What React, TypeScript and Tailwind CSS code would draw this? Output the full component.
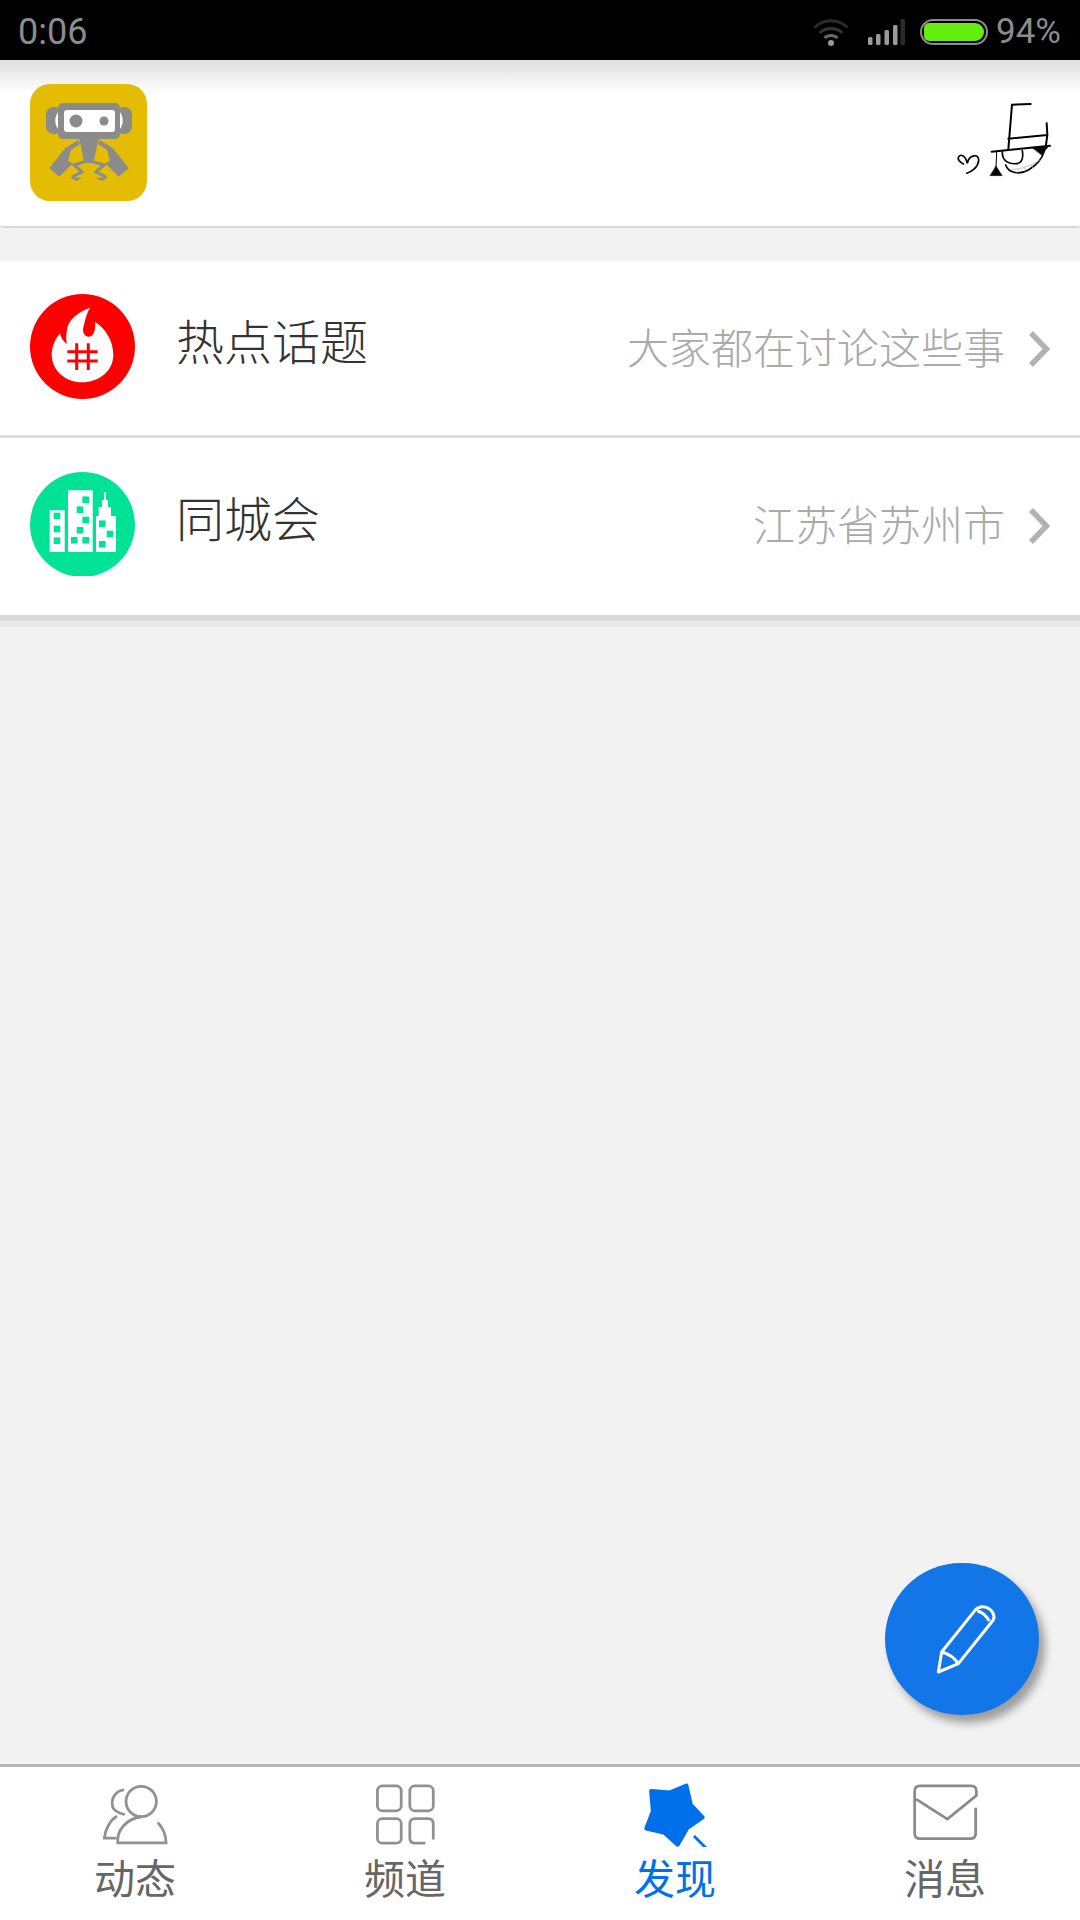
const cjk = "font-['Noto_Sans_CJK_SC',sans-serif]";

function Logo() {
  return (
    <svg viewBox="0 0 117 117" className="w-[117px] h-[117px]">
      <rect width="117" height="117" rx="20" fill="#e4bc03" />
      <g fill="#8b8b8b">
        <rect x="16" y="23" width="16" height="27" rx="7.500" />
        <rect x="86" y="23" width="16" height="27" rx="7.500" />
      </g>
      <path d="M29 27C24 32 24 41 29 46H32V27ZM89 27C94 32 94 41 89 46H86V27Z" fill="#fff" />
      <g fill="#8b8b8b">
        <rect x="28" y="19" width="62" height="36" rx="5" />
        <path d="M49 54H69L67 62L63.500 79H54L51 62Z" />
        <path d="M48.300 56L35 64.300L19.300 84.300L29.300 92.700L42.700 79.300L38 77L41 66L50 60Z" />
        <path d="M40 93L52 94L46 97Z" />
        <g transform="translate(118 0) scale(-1 1)">
          <path d="M48.300 56L35 64.300L19.300 84.300L29.300 92.700L42.700 79.300L38 77L41 66L50 60Z" />
          <path d="M40 93L52 94L46 97Z" />
        </g>
      </g>
      <path d="M54 78L44 81L52 88L42 93M64 78L74 81L66 88L76 93" fill="none" stroke="#8b8b8b" strokeWidth="3" />
      <rect x="34" y="26" width="51" height="22" rx="3" fill="#fff" />
      <circle cx="46" cy="37" r="6.500" fill="#8b8b8b" />
      <circle cx="74" cy="37" r="4.500" fill="#8b8b8b" />
    </svg>
  );
}

function Avatar() {
  return (
    <svg viewBox="0 0 390 300" className="w-[130px] h-[100px]" fill="none" stroke="#000" strokeLinecap="round">
      <path d="M272 42L216 44L205 178M320 100L322 135L318 165M205 146L322 135" strokeWidth="6" />
      <path d="M155 185L330 167" strokeWidth="6" />
      <path d="M275 172L325 170L305 195Z" fill="#000" strokeWidth="1" />
      <path d="M187 185C185 215 210 225 235 220C248 215 250 200 247 182" strokeWidth="5" />
      <path d="M197 225C205 250 240 255 265 240C290 225 305 210 312 185" strokeWidth="5" />
      <path d="M215 238C245 238 280 225 300 210M235 238L233 248M255 233L255 243M275 224L278 234" stroke="#aaa" strokeWidth="2" />
      <path d="M170 185L168 235" strokeWidth="3" />
      <path d="M150 257H187L168 228Z" fill="#000" strokeWidth="1" />
      <path d="M70 222C60 215 52 210 55 202C60 190 76 195 82 220C86 195 118 188 116 212C114 232 95 245 80 250" strokeWidth="5" />
    </svg>
  );
}

function FlameIcon() {
  return (
    <svg viewBox="0 0 105 105" className="w-[105px] h-[105px]">
      <circle cx="52.500" cy="52.500" r="52.500" fill="#ff0000" />
      <path
        d="M60 13.700C48 18 37 26 36.700 38C36 43 36 46 37 50C33 47 31 44 30 39.300C25 45 21.700 53 21.700 61C22 77 36 88.300 51.700 88.300C69 88.300 83.300 77 83.300 61C83.300 47 76 35 65 27.700C66 35 64 42.700 58.300 42.700C53 42 52 36 54 31C55 25 57 19 60 13.700Z"
        fill="#fff"
      />
      <path d="M46.700 49.300V76M58.300 49.300V76M37.300 57.700H67.700M37.300 67H67.700" stroke="#ff0000" strokeWidth="3" />
    </svg>
  );
}

const cityWindows = [
  [27, 44], [27, 57], [27, 68.7],
  [55.7, 27.7], [50, 37.7], [55.7, 48], [50, 58.300], [44.300, 68.300], [55.700, 68.300],
  [72.300, 51.700], [80, 62], [72.300, 72.300],
];

function CityIcon() {
  return (
    <svg viewBox="0 0 105 104" className="w-[105px] h-[104px]">
      <circle cx="52.500" cy="52.500" r="52.500" fill="#00e396" />
      <path d="M19.700 38.300H34.700V80H19.700ZM38 18.300H62.700V80H38ZM66 80V44H68.700V35H72V28H74V20.500H76V28H78V35H81V44H86V80Z" fill="#fff" />
      {cityWindows.map(([x, y]) => (
        <rect key={`${x}-${y}`} x={x - 3.3} y={y - 3.3} width="6.600" height="6.600" fill="#00e396" />
      ))}
    </svg>
  );
}

function StatusIcons() {
  return (
    <div className="flex items-center">
      <svg viewBox="0 0 36 28" className="w-[36px] h-[28px]" fill="none">
        <path d="M1.500 9.500C11 0.500 25 0.500 34.500 9.500" stroke="#2b2b2b" strokeWidth="3" />
        <path d="M6.500 15C13 9 23 9 29.500 15" stroke="#333" strokeWidth="3" />
        <path d="M11.500 20C15 16.500 21 16.500 24.500 20" stroke="#6a6a6a" strokeWidth="3" />
        <circle cx="18" cy="25" r="3" fill="#9a9a9a" />
      </svg>
      <svg viewBox="0 0 38 26" className="w-[38px] h-[26px] ml-[19px]">
        <rect x="0" y="18" width="4.500" height="8" rx="1.500" fill="#9a9a9a" />
        <rect x="8" y="15" width="4.500" height="11" rx="1.500" fill="#9a9a9a" />
        <rect x="16.500" y="11" width="4.500" height="15" rx="1.500" fill="#9a9a9a" />
        <rect x="25" y="6" width="4.500" height="20" rx="1.500" fill="#9a9a9a" />
        <rect x="32.500" y="0" width="4.500" height="26" rx="1" fill="#2b2b2b" />
      </svg>
      <div className="ml-[14px] w-[68px] h-[26px] rounded-full border-2 border-[#8c8c8c] p-[2px]">
        <div className="w-full h-full rounded-l-[5px] rounded-r-[9px] bg-[#66ee11]" />
      </div>
      <span className="ml-[8px] text-[35px] leading-none text-[#8c8c8c] font-['Roboto',sans-serif]">94%</span>
    </div>
  );
}

function Chevron() {
  return (
    <svg viewBox="0 0 22 36" className="w-[22px] h-[36px] ml-[23px] mr-[30px] mt-[15px]" fill="none" stroke="#b2b2b2" strokeWidth="5.500">
      <path d="M3 2L18.500 18L3 34" />
    </svg>
  );
}

function TabIcon({ name }: { name: string }) {
  const base = 'w-[70px] h-[70px]';
  if (name === 'people') {
    return (
      <svg viewBox="290.500 81 203 203" className={base} fill="none" stroke="#919191" strokeWidth="8">
        <circle cx="410" cy="152" r="44" />
        <path d="M458 213C472 228 482 250 482 272H342C338 235 370 200 410 197" />
        <path d="M360 118C335 120 320 145 328 170C332 180 345 185 362 190M340 195C320 205 305 235 303 258H338" />
      </svg>
    );
  }
  if (name === 'grid') {
    return (
      <svg viewBox="1074.500 81 203 203" className={base} fill="none" stroke="#919191" strokeWidth="8">
        <rect x="1096" y="107" width="69" height="72" rx="14" />
        <rect x="1190" y="107" width="68" height="72" rx="14" />
        <rect x="1096" y="202" width="69" height="71" rx="14" />
        <path d="M1235 273H1205Q1190 273 1190 258V217Q1190 202 1205 202H1243Q1258 202 1258 217V262" />
      </svg>
    );
  }
  if (name === 'star') {
    return (
      <svg viewBox="290.500 81 203 203" className={base} fill="#0070ea" stroke="#0070ea" strokeLinejoin="round">
        <path d="M425 106L438 162L472 198L428 228L400 277L362 243L309 230L328 180L323 122L378 126Z" strokeWidth="12" />
        <path d="M447 252L485 290" fill="none" strokeWidth="8" />
      </svg>
    );
  }
  return (
    <svg viewBox="1074.500 81 203 203" className={base} fill="none" stroke="#8a8a8a" strokeWidth="8">
      <path d="M1265 170V245Q1265 260 1250 260H1103Q1088 260 1088 245V122Q1088 107 1103 107H1252Q1267 107 1267 122V135L1183 203L1092 145" />
    </svg>
  );
}

const tabs = [
  { icon: 'people', label: '动态', active: false },
  { icon: 'grid', label: '频道', active: false },
  { icon: 'star', label: '发现', active: true },
  { icon: 'mail', label: '消息', active: false },
];

export default function App() {
  return (
    <div className={`w-[1080px] h-[1920px] flex flex-col bg-[#f2f2f2] overflow-hidden ${cjk}`}>
      {/* Status bar */}
      <div className="h-[60px] shrink-0 bg-black flex items-center justify-between pl-[18px] pr-[19px] pt-[3px]">
        <span className="text-[36px] leading-none text-[#8c8c8c] font-['Roboto',sans-serif]">0:06</span>
        <StatusIcons />
      </div>

      {/* Header */}
      <div className="h-[168px] shrink-0 flex items-start justify-between pl-[30px] pr-[10px] pt-[24px] rounded-b-[4px] border-b-2 border-[#d5dade] bg-linear-to-b from-[#dedede] to-white to-[20%]">
        <Logo />
        <div className="mt-[6px]">
          <Avatar />
        </div>
      </div>

      {/* Rows */}
      <div className="mt-[33px] shrink-0 flex flex-col">
        <div className="h-[177px] shrink-0 flex items-start pl-[30px] pt-[33px] bg-white border-b-[3px] border-[#dcdcdc]">
          <FlameIcon />
          <span className="ml-[41px] mt-[10px] text-[48px] leading-[70px] font-light text-[#333333]">热点话题</span>
          <div className="ml-auto mt-[22px] flex items-start">
            <span className="text-[42px] leading-[60px] font-light text-[#aaaaaa]">大家都在讨论这些事</span>
            <Chevron />
          </div>
        </div>
        <div className="h-[177px] shrink-0 flex items-start pl-[30px] pt-[34px] bg-white">
          <CityIcon />
          <span className="ml-[41px] mt-[9px] text-[48px] leading-[70px] font-light text-[#333333]">同城会</span>
          <div className="ml-auto mt-[21px] flex items-start">
            <span className="text-[42px] leading-[60px] font-light text-[#aaaaaa]">江苏省苏州市</span>
            <Chevron />
          </div>
        </div>
        <div className="h-[6px] bg-[#d8d8d8]" />
        <div className="h-[6px] bg-[#e9e9e9]" />
      </div>

      {/* Empty area with compose button */}
      <div className="flex-1 relative">
        <div className="absolute left-[885px] top-[936px] w-[154px] h-[152px] rounded-full bg-[#1276e8] shadow-[6px_8px_8px_rgba(0,0,0,0.35)]">
          <svg viewBox="75 68 462 462" className="w-[154px] h-[154px]" fill="none" stroke="#fff" strokeWidth="9" strokeLinejoin="round">
            <path d="M235 395L245 335L345 210C355 197 375 195 390 207C405 220 405 235 395 245L295 370Z" />
            <path d="M245 335C265 340 285 355 295 370M352 212C365 215 380 228 388 242" />
          </svg>
        </div>
      </div>

      {/* Tab bar */}
      <div className="h-[156px] shrink-0 grid grid-cols-4 bg-white border-t-[3px] border-[#b5b5b5]">
        {tabs.map((tab) => (
          <div key={tab.label} className="flex flex-col items-center pt-[10px]">
            <TabIcon name={tab.icon} />
            <span className={`text-[41px] leading-[58px] ${tab.active ? 'text-[#0070ea]' : 'text-[#666666]'}`}>{tab.label}</span>
          </div>
        ))}
      </div>
    </div>
  );
}
